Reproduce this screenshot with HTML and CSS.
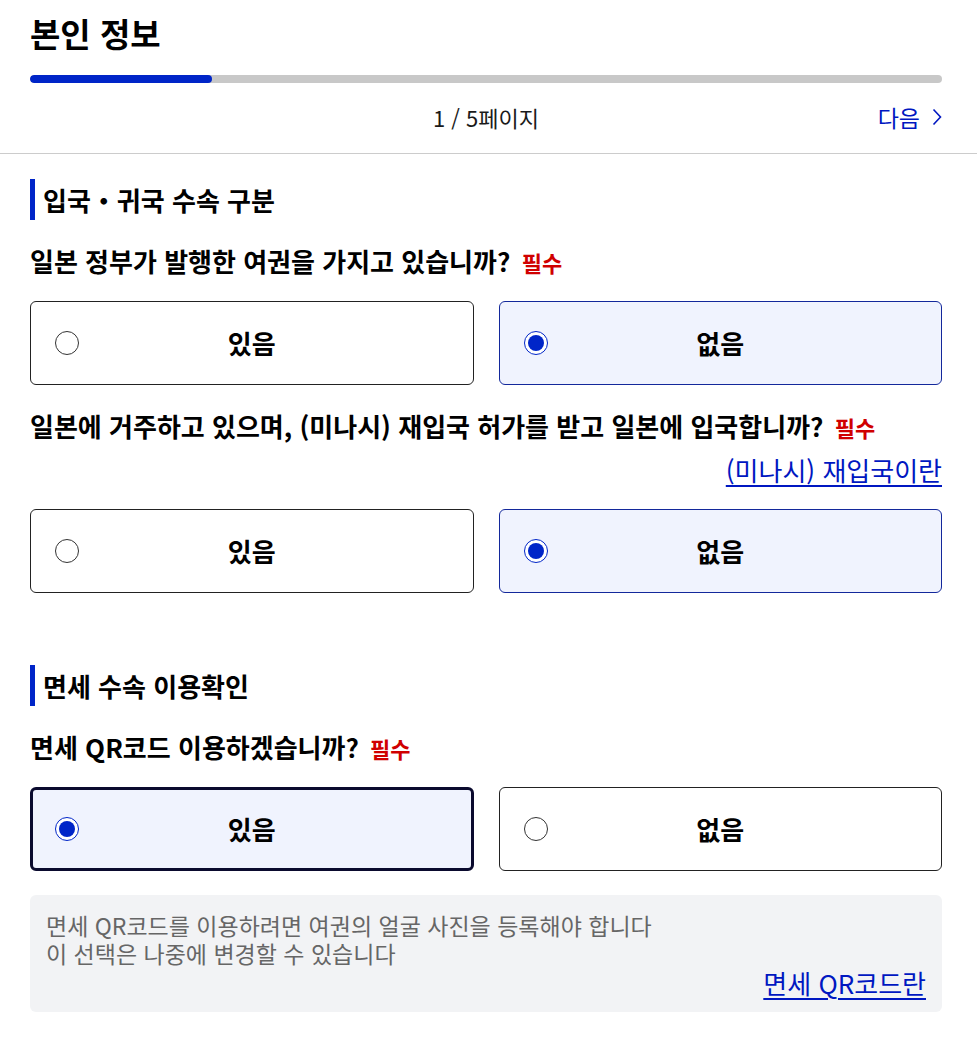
FILE: index.html
```html
<!DOCTYPE html>
<html lang="ko">
<head>
<meta charset="utf-8">
<title>본인 정보</title>
<link rel="stylesheet" href="styles.css">
</head>
<body>
<div class="page">
  <header class="top">
    <h1 class="title">본인 정보</h1>
    <div class="progress"><div class="progress-fill" style="width:20%"></div></div>
    <div class="pager">
      <span class="pager-spacer"></span>
      <span class="pager-count">1 / 5페이지</span>
      <a class="next" href="#">다음<svg class="chev" width="10" height="18" viewBox="0 0 10 18"><path d="M1.5 1.5 L8.5 9 L1.5 16.5" fill="none" stroke="#0017c1" stroke-width="1.6"/></svg></a>
    </div>
  </header>

  <main class="content">
    <section class="section">
      <h2 class="section-title">입국・귀국 수속 구분</h2>

      <p class="question">일본 정부가 발행한 여권을 가지고 있습니까? <span class="req">필수</span></p>
      <div class="options">
        <label class="option"><span class="radio"></span><span class="option-text">있음</span></label>
        <label class="option selected"><span class="radio checked"></span><span class="option-text">없음</span></label>
      </div>

      <p class="question">일본에 거주하고 있으며, (미나시) 재입국 허가를 받고 일본에 입국합니까? <span class="req">필수</span></p>
      <div class="help-link"><a href="#">(미나시) 재입국이란</a></div>
      <div class="options options-after-link">
        <label class="option"><span class="radio"></span><span class="option-text">있음</span></label>
        <label class="option selected"><span class="radio checked"></span><span class="option-text">없음</span></label>
      </div>
    </section>

    <section class="section section-second">
      <h2 class="section-title">면세 수속 이용확인</h2>

      <p class="question">면세 QR코드 이용하겠습니까? <span class="req">필수</span></p>
      <div class="options">
        <label class="option selected focused"><span class="radio checked"></span><span class="option-text">있음</span></label>
        <label class="option"><span class="radio"></span><span class="option-text">없음</span></label>
      </div>

      <div class="info">
        <p class="info-text"><span class="info-line">면세 QR코드를 이용하려면 여권의 얼굴 사진을 등록해야 합니다</span><span class="info-line">이 선택은 나중에 변경할 수 있습니다</span></p>
        <div class="info-link"><a href="#">면세 QR코드란</a></div>
      </div>
    </section>
  </main>
</div>
</body>
</html>
```

FILE: styles.css
```css
* { box-sizing: border-box; }

html, body {
  margin: 0;
  padding: 0;
  background: #ffffff;
}

body {
  font-family: "Noto Sans CJK KR", "Noto Sans", sans-serif;
  color: #000000;
}

.top {
  padding: 12px 35px 21px 30px;
  border-bottom: 1px solid #cccccc;
}

.title {
  margin: 0;
  font-size: 33px;
  line-height: 43px;
  font-weight: 700;
}

.progress {
  margin-top: 20px;
  height: 8px;
  border-radius: 4px;
  background: #c8c8c8;
  overflow: hidden;
}

.progress-fill {
  height: 100%;
  border-radius: 4px;
  background: #0025c8;
}

.pager {
  margin-top: 19px;
  display: grid;
  grid-template-columns: 1fr auto 1fr;
  align-items: center;
  height: 30px;
}

.pager-count {
  font-size: 22px;
  line-height: 30px;
  color: #1a1a1a;
}

.next {
  justify-self: end;
  display: flex;
  align-items: center;
  gap: 12px;
  font-size: 23px;
  line-height: 30px;
  color: #0017c1;
  text-decoration: none;
}

.chev { display: block; }

.content {
  padding: 0 35px 40px 30px;
}

.section {
  padding-top: 25px;
}

.section-second {
  padding-top: 72px;
}

.section-title {
  margin: 0;
  border-left: 5px solid #0025c8;
  padding-left: 8px;
  font-size: 26px;
  line-height: 41px;
  font-weight: 700;
}

.question {
  margin: 24px 0 0;
  font-size: 26px;
  line-height: 34px;
  height: 34px;
  font-weight: 700;
  white-space: nowrap;
}

.req {
  color: #d00000;
  font-size: 22px;
  line-height: 1;
  font-weight: 700;
  margin-left: 4px;
}

.help-link {
  margin-top: 10px;
  text-align: right;
  font-size: 26px;
  line-height: 34px;
  height: 34px;
}

.help-link a,
.info-link a {
  color: #0017c1;
  text-decoration: underline;
  text-underline-offset: 4px;
  text-decoration-thickness: 1.5px;
}

.options {
  margin-top: 23px;
  display: grid;
  grid-template-columns: 1fr 1fr;
  gap: 25px;
}

.options-after-link {
  margin-top: 22px;
}

.option {
  height: 84px;
  border: 1px solid #222222;
  border-radius: 6px;
  background: #ffffff;
  display: grid;
  grid-template-columns: 1fr auto 1fr;
  align-items: center;
  padding-left: 24px;
  padding-right: 24px;
}

.option.selected {
  background: #f0f3fe;
  border-color: #13289b;
}

.option.focused {
  border: 3px solid #0a0a2e;
  padding-left: 22px;
  padding-right: 22px;
}

.radio {
  width: 24px;
  height: 24px;
  border: 1px solid #333333;
  border-radius: 50%;
  background: #ffffff;
  display: flex;
  align-items: center;
  justify-content: center;
}

.radio.checked {
  border: 1.5px solid #0025c8;
}

.radio.checked::after {
  content: "";
  width: 16px;
  height: 16px;
  border-radius: 50%;
  background: #0025c8;
}

.option-text {
  font-size: 26px;
  font-weight: 700;
  line-height: 34px;
}

.info {
  margin-top: 24px;
  background: #f2f3f5;
  border-radius: 6px;
  padding: 16px 16px 14px;
  height: 117px;
}

.info-text {
  margin: 0;
  font-size: 23px;
  color: #666666;
}

.info-line {
  display: block;
  height: 28px;
  line-height: 28px;
}

.info-link {
  margin-top: 1px;
  text-align: right;
  font-size: 26px;
  line-height: 30px;
}
```
